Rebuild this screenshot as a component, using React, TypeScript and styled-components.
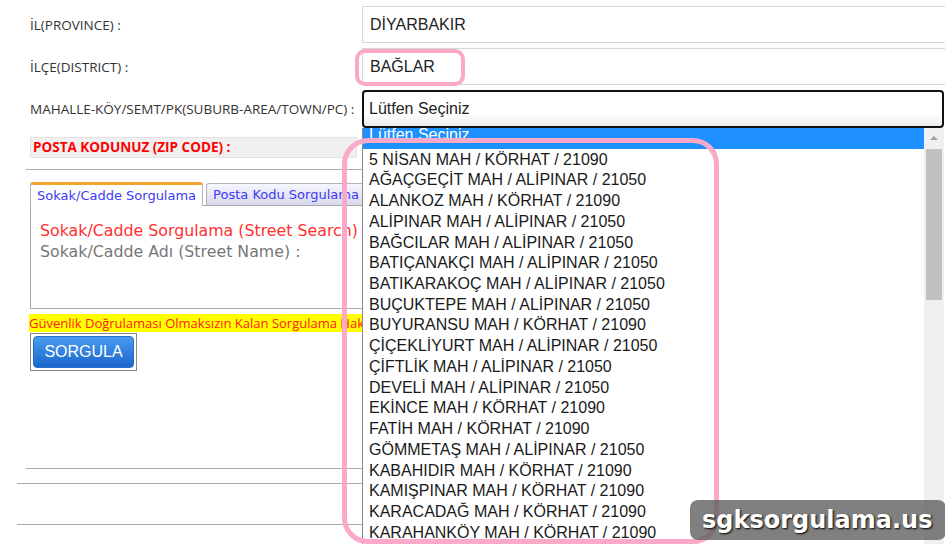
import React from 'react';
import styled, { createGlobalStyle } from 'styled-components';

const GlobalStyle = createGlobalStyle`
  html, body { margin: 0; padding: 0; background: #fff; }
  body { font-family: "Open Sans", "Liberation Sans", sans-serif; }
`;

const Page = styled.div`
  position: relative;
  width: 945px;
  height: 544px;
  overflow: hidden;
  background: #fff;
`;

const Form = styled.div`
  padding: 6px 0 0 30px;
  display: flex;
  flex-direction: column;
`;

const FieldRow = styled.div`
  display: grid;
  grid-template-columns: 332px 1fr;
  align-items: center;
  height: ${p => p.$h || 37}px;
  margin-bottom: 5px;
`;

const Label = styled.div`
  font-size: 13.5px;
  color: #333;
  white-space: nowrap;
`;

const TextBox = styled.div`
  height: 100%;
  box-sizing: border-box;
  width: calc(100% + 10px);
  border: 1px solid #d6d6d6;
  padding-left: 7px;
  display: flex;
  align-items: center;
  font: 16px "Liberation Sans", Arial, sans-serif;
  color: #222;
`;

const SelectBox = styled(TextBox)`
  width: 582px;
  border: 2px solid #111;
  border-radius: 4px;
  padding-left: 5px;
  background: linear-gradient(#fff 65%, #ececec);
`;

const ZipLabel = styled.div`
  width: 327px;
  height: 21px;
  box-sizing: border-box;
  margin-top: 4px;
  padding-left: 2px;
  background: #f0f0f0;
  border: 1px solid #e2e2e2;
  color: #ff0000;
  font-weight: 700;
  font-size: 13.5px;
  line-height: 19px;
  white-space: nowrap;
`;

const Rule = styled.div`
  height: 1px;
  background: #a8a8a8;
  margin-left: -${p => p.$inset}px;
  margin-top: ${p => p.$top}px;
  width: ${p => 332 + p.$inset}px;
`;

const TabStrip = styled.div`
  display: flex;
  gap: 3px;
  margin-top: 11px;
  height: 24px;
  align-items: flex-end;
`;

const Tab = styled.div`
  height: ${p => (p.$active ? 24 : 22)}px;
  box-sizing: border-box;
  padding: 0 6px;
  font: 13px "DejaVu Sans", Verdana, sans-serif;
  color: #3b3bf5;
  display: flex;
  align-items: center;
  white-space: nowrap;
  border: 1px solid #b4b4b4;
  border-bottom: none;
  border-radius: 3px 3px 0 0;
  background: ${p => (p.$active ? '#fff' : 'linear-gradient(#f6f6ff, #d9d9ee)')};
  border-top: ${p => (p.$active ? '3px solid #f5a431' : '1px solid #b4b4b4')};
  position: relative;
  top: ${p => (p.$active ? 1 : 0)}px;
`;

const Panel = styled.div`
  width: 380px;
  height: 104px;
  box-sizing: border-box;
  border: 1px solid #a8a8a8;
  padding: 14px 9px 10px;
  font: 15.8px "DejaVu Sans", Verdana, sans-serif;
  line-height: 21px;
`;

const PanelTitle = styled.div`
  color: #ff3030;
  white-space: nowrap;
`;

const PanelField = styled.div`
  color: #777;
  white-space: nowrap;
`;

const Warning = styled.div`
  margin-top: 5px;
  margin-left: -1px;
  width: 380px;
  height: 18px;
  background: #ffff00;
  color: #ff1a1a;
  font-size: 13px;
  line-height: 18px;
  white-space: nowrap;
  overflow: hidden;
`;

const ButtonFrame = styled.div`
  width: 107px;
  height: 38px;
  box-sizing: border-box;
  border: 1px solid #8a8a8a;
  padding: 2px;
  margin-top: 1px;
`;

const SearchButton = styled.button`
  width: 100%;
  height: 100%;
  border: 1px solid #2a6fc6;
  border-radius: 4px;
  background: linear-gradient(#4a9cf0, #1a66cc);
  color: #fff;
  font: 16px "Liberation Sans", Arial, sans-serif;
  padding: 0;
`;

const Listbox = styled.div`
  position: absolute;
  left: 362px;
  top: 128px;
  width: 582px;
  bottom: 0;
  display: flex;
  background: #fff;
  border-left: 1px solid #8a8a8a;
  box-sizing: border-box;
`;

const Options = styled.div`
  flex: 1;
  overflow: hidden;
`;

const Option = styled.div`
  height: 20.72px;
  line-height: 20.72px;
  padding-left: 6px;
  font: 16px "Liberation Sans", Arial, sans-serif;
  white-space: nowrap;
  overflow: hidden;
  background: ${p => (p.$selected ? '#1e90ff' : 'transparent')};
  color: ${p => (p.$selected ? '#fff' : '#1a1a1a')};
  & > span {
    display: inline-block;
    transform: translateY(${p => (p.$selected ? -2 : 2)}px);
  }
`;

const Scrollbar = styled.div`
  width: 20px;
  background: #f0f0f0;
  display: flex;
  flex-direction: column;
  align-items: center;
`;

const ArrowUp = styled.div`
  margin-top: 8px;
  width: 0;
  height: 0;
  border-left: 4px solid transparent;
  border-right: 4px solid transparent;
  border-bottom: 4px solid #a0a0a0;
`;

const Thumb = styled.div`
  margin-top: 9px;
  width: 16px;
  height: 151px;
  background: #c1c1c1;
`;

const Ring = styled.div`
  position: absolute;
  pointer-events: none;
  box-sizing: border-box;
  border: ${p => p.$w}px solid #fba9c8;
  border-radius: ${p => p.$r}px;
`;

const Watermark = styled.div`
  position: absolute;
  left: 690px;
  top: 500px;
  width: 256px;
  height: 40px;
  border-radius: 8px;
  background: rgba(92, 92, 92, 0.78);
  color: #fff;
  font: bold 24px "DejaVu Sans", Verdana, sans-serif;
  display: flex;
  align-items: center;
  padding-left: 12px;
  box-sizing: border-box;
  text-shadow: 1px 1px 2px #000;
`;

const options = [
  '5 NİSAN MAH / KÖRHAT / 21090',
  'AĞAÇGEÇİT MAH / ALİPINAR / 21050',
  'ALANKOZ MAH / KÖRHAT / 21090',
  'ALİPINAR MAH / ALİPINAR / 21050',
  'BAĞCILAR MAH / ALİPINAR / 21050',
  'BATIÇANAKÇI MAH / ALİPINAR / 21050',
  'BATIKARAKOÇ MAH / ALİPINAR / 21050',
  'BUÇUKTEPE MAH / ALİPINAR / 21050',
  'BUYURANSU MAH / KÖRHAT / 21090',
  'ÇİÇEKLİYURT MAH / ALİPINAR / 21050',
  'ÇİFTLİK MAH / ALİPINAR / 21050',
  'DEVELİ MAH / ALİPINAR / 21050',
  'EKİNCE MAH / KÖRHAT / 21090',
  'FATİH MAH / KÖRHAT / 21090',
  'GÖMMETAŞ MAH / ALİPINAR / 21050',
  'KABAHIDIR MAH / KÖRHAT / 21090',
  'KAMIŞPINAR MAH / KÖRHAT / 21090',
  'KARACADAĞ MAH / KÖRHAT / 21090',
  'KARAHANKÖY MAH / KÖRHAT / 21090',
];

export default function App() {
  return (
    <Page>
      <GlobalStyle />
      <Form>
        <FieldRow>
          <Label>İL(PROVINCE) :</Label>
          <TextBox>DİYARBAKIR</TextBox>
        </FieldRow>
        <FieldRow>
          <Label>İLÇE(DISTRICT) :</Label>
          <TextBox>BAĞLAR</TextBox>
        </FieldRow>
        <FieldRow $h={38}>
          <Label>MAHALLE-KÖY/SEMT/PK(SUBURB-AREA/TOWN/PC) :</Label>
          <SelectBox>Lütfen Seçiniz</SelectBox>
        </FieldRow>
        <ZipLabel>POSTA KODUNUZ (ZIP CODE) :</ZipLabel>
        <Rule $inset={4} $top={11} />
        <TabStrip>
          <Tab $active>Sokak/Cadde Sorgulama</Tab>
          <Tab>Posta Kodu Sorgulama</Tab>
        </TabStrip>
        <Panel>
          <PanelTitle>Sokak/Cadde Sorgulama (Street Search)</PanelTitle>
          <PanelField>Sokak/Cadde Adı (Street Name) :</PanelField>
        </Panel>
        <Warning>Güvenlik Doğrulaması Olmaksızın Kalan Sorgulama Hakkınız</Warning>
        <ButtonFrame>
          <SearchButton>SORGULA</SearchButton>
        </ButtonFrame>
        <Rule $inset={4} $top={97} />
        <Rule $inset={13} $top={14} />
        <Rule $inset={13} $top={40} />
      </Form>

      <Listbox>
        <Options>
          <Option $selected><span>Lütfen Seçiniz</span></Option>
          {options.map(o => (
            <Option key={o}><span>{o}</span></Option>
          ))}
        </Options>
        <Scrollbar>
          <ArrowUp />
          <Thumb />
        </Scrollbar>
      </Listbox>

      <Ring $w={4} $r={10} style={{ left: 355, top: 49, width: 110, height: 37 }} />
      <Ring $w={5} $r={26} style={{ left: 342, top: 138, width: 377, height: 406 }} />

      <Watermark>sgksorgulama.us</Watermark>
    </Page>
  );
}
